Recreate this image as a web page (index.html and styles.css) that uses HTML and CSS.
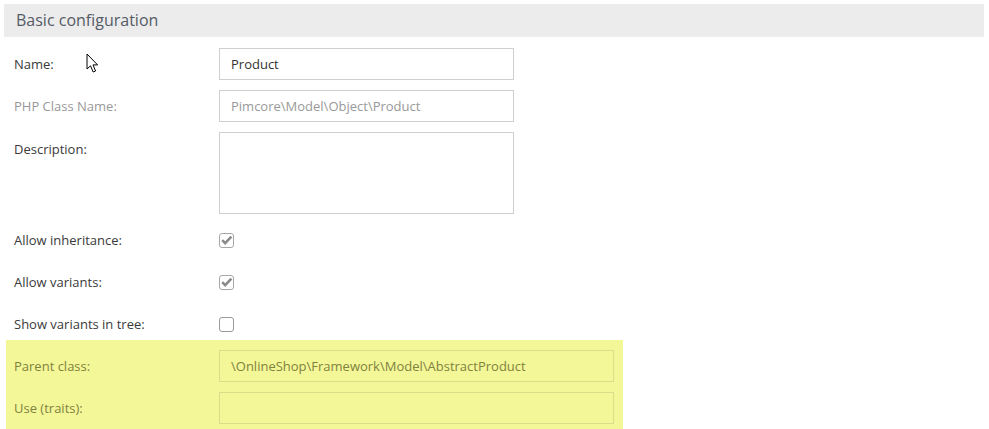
FILE: index.html
```html
<!DOCTYPE html>
<html>
<head>
<meta charset="utf-8">
<link rel="stylesheet" href="styles.css">
</head>
<body>
<div class="page">
  <div class="header">Basic configuration</div>
  <div class="form">
    <div class="row">
      <label class="label">Name:</label>
      <div class="input">Product</div>
    </div>
    <div class="row">
      <label class="label disabled">PHP Class Name:</label>
      <div class="input disabled">Pimcore\Model\Object\Product</div>
    </div>
    <div class="row row-top">
      <label class="label label-top">Description:</label>
      <div class="input textarea"></div>
    </div>
    <div class="row">
      <label class="label">Allow inheritance:</label>
      <span class="checkbox"><svg viewBox="0 0 15 15" width="15" height="15"><rect x="0.5" y="0.5" width="14" height="14" rx="2.5" fill="#fff" stroke="#a6a6a6"/><path d="M3.2 7.2 L6.2 10.2 L12.4 3.6" fill="none" stroke="#8a8a8a" stroke-width="2.6"/></svg></span>
    </div>
    <div class="row">
      <label class="label">Allow variants:</label>
      <span class="checkbox"><svg viewBox="0 0 15 15" width="15" height="15"><rect x="0.5" y="0.5" width="14" height="14" rx="2.5" fill="#fff" stroke="#a6a6a6"/><path d="M3.2 7.2 L6.2 10.2 L12.4 3.6" fill="none" stroke="#8a8a8a" stroke-width="2.6"/></svg></span>
    </div>
    <div class="row">
      <label class="label">Show variants in tree:</label>
      <span class="checkbox"><svg viewBox="0 0 15 15" width="15" height="15"><rect x="0.5" y="0.5" width="14" height="14" rx="2.5" fill="#fff" stroke="#999"/></svg></span>
    </div>
    <div class="highlight">
      <div class="row">
        <label class="label hl">Parent class:</label>
        <div class="input wide hl-input">\OnlineShop\Framework\Model\AbstractProduct</div>
      </div>
      <div class="row">
        <label class="label hl">Use (traits):</label>
        <div class="input wide hl-input"></div>
      </div>
    </div>
  </div>
</div>
<svg class="cursor" width="14" height="22" viewBox="0 0 14 22"><path d="M1 1 L1 16 L4.5 12.8 L7.2 19 L9.6 18 L7 11.9 L11.6 11.9 Z" fill="#fff" stroke="#000" stroke-width="1" stroke-linejoin="miter"/></svg>
</body>
</html>
```

FILE: styles.css
```css
html, body {
  margin: 0;
  padding: 0;
  background: #fff;
}
body {
  font-family: "Open Sans", "DejaVu Sans", sans-serif;
  font-size: 13px;
  color: #333;
  position: relative;
  height: 429px;
  overflow: hidden;
}
.page {
  padding: 4px 5px 0 4px;
}
.header {
  height: 33px;
  background: #ececec;
  color: #555b66;
  font-size: 16px;
  line-height: 33px;
  padding-left: 12px;
}
.form {
  padding-top: 11px;
  display: flex;
  flex-direction: column;
  gap: 10px;
}
.row {
  display: flex;
  align-items: center;
  min-height: 32px;
  padding-left: 10px;
}
.row-top {
  align-items: flex-start;
}
.label {
  width: 205px;
  flex: none;
  color: #3a3a3a;
}
.label-top {
  padding-top: 8px;
}
.label.disabled {
  color: #999;
}
.input {
  box-sizing: border-box;
  width: 295px;
  height: 32px;
  border: 1px solid #cfcfcf;
  background: #fff;
  padding: 0 11px;
  line-height: 30px;
  color: #333;
}
.input.disabled {
  color: #999;
}
.textarea {
  height: 82px;
}
.checkbox {
  display: flex;
  width: 15px;
  height: 15px;
}
.highlight {
  margin-top: -10px;
  margin-left: 2px;
  width: 617px;
  background: #f3f797;
  padding: 10px 0 6px 0;
  display: flex;
  flex-direction: column;
  gap: 10px;
}
.highlight .row {
  padding-left: 8px;
}
.label.hl {
  color: #80823f;
}
.input.wide {
  width: 395px;
}
.hl-input {
  background: #f3f797;
  border-color: #dadd8c;
  color: #80823f;
}
.cursor {
  position: absolute;
  left: 86px;
  top: 53px;
}
```
